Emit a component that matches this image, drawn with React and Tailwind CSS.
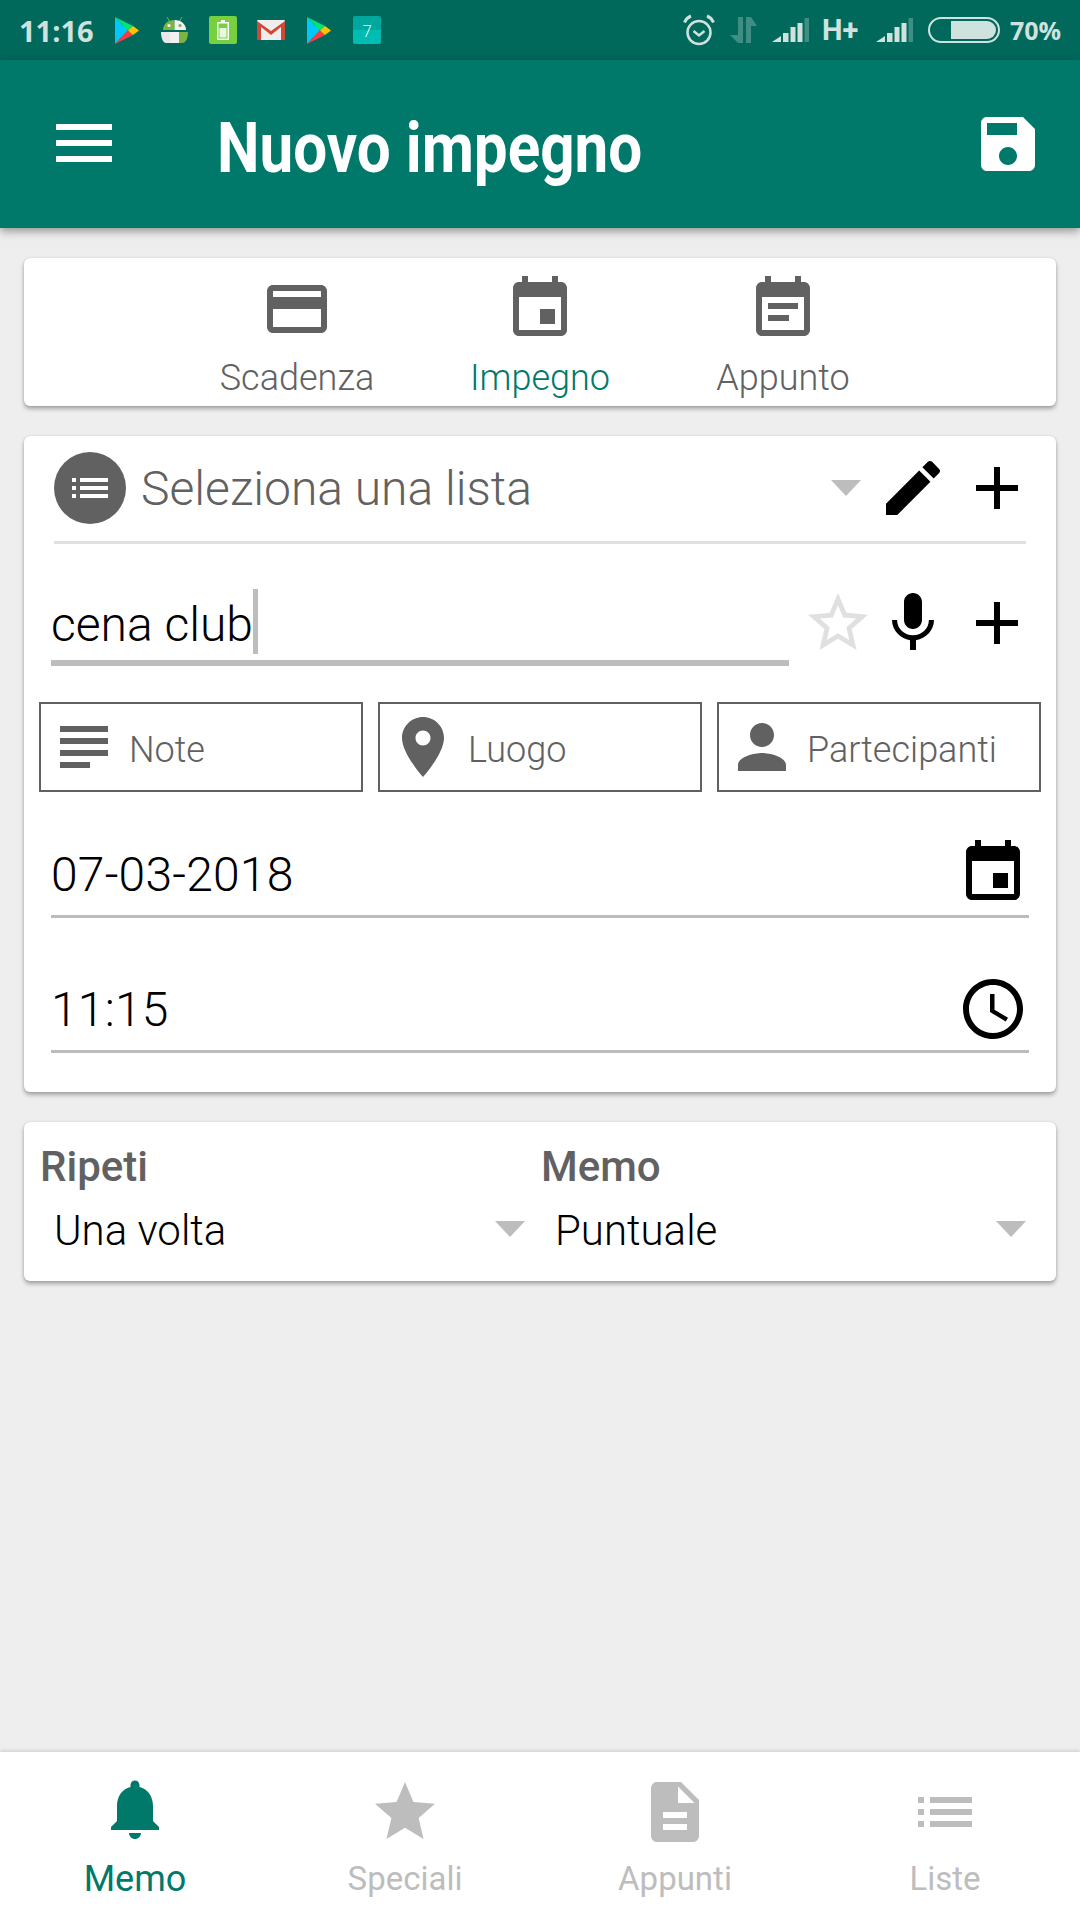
import React from "react";

const P = {
  card: "M20 4H4c-1.11 0-1.99.89-1.99 2L2 18c0 1.11.89 2 2 2h16c1.11 0 2-.89 2-2V6c0-1.11-.89-2-2-2zm0 14H4v-6h16v6zm0-10H4V6h16v2z",
  event: "M17 12h-5v5h5v-5zM16 1v2H8V1H6v2H5c-1.11 0-1.99.9-1.99 2L3 19c0 1.1.89 2 2 2h14c1.1 0 2-.9 2-2V5c0-1.1-.9-2-2-2h-1V1h-2zm3 18H5V8h14v11z",
  note: "M19 3h-1V1h-2v2H8V1H6v2H5c-1.11 0-1.99.9-1.99 2L3 19c0 1.1.89 2 2 2h14c1.1 0 2-.9 2-2V5c0-1.1-.9-2-2-2zm0 16H5V8h14v11zM7 10h10v2H7zm0 4h7v2H7z",
  list: "M3 13h2v-2H3v2zm0 4h2v-2H3v2zm0-8h2V7H3v2zm4 4h14v-2H7v2zm0 4h14v-2H7v2zM7 7v2h14V7H7z",
  edit: "M3 17.25V21h3.75L17.81 9.94l-3.75-3.75L3 17.25zM20.71 7.04c.39-.39.39-1.02 0-1.41l-2.34-2.34c-.39-.39-1.02-.39-1.41 0l-1.83 1.83 3.75 3.75 1.83-1.83z",
  add: "M19 13h-6v6h-2v-6H5v-2h6V5h2v6h6v2z",
  starBorder: "M22 9.24l-7.19-.62L12 2 9.19 8.63 2 9.24l5.46 4.73L5.82 21 12 17.27 18.18 21l-1.63-7.03L22 9.24zM12 15.4l-3.76 2.27 1-4.28-3.32-2.88 4.38-.38L12 6.1l1.71 4.04 4.38.38-3.32 2.88 1 4.28L12 15.4z",
  mic: "M12 14c1.66 0 2.99-1.34 2.99-3L15 5c0-1.66-1.34-3-3-3S9 3.34 9 5v6c0 1.66 1.34 3 3 3zm5.3-3c0 3-2.54 5.1-5.3 5.1S6.7 14 6.7 11H5c0 3.41 2.72 6.23 6 6.72V21h2v-3.28c3.28-.48 6-3.3 6-6.72h-1.7z",
  subject: "M14 17H4v2h10v-2zm6-8H4v2h16V9zM4 15h16v-2H4v2zM4 5v2h16V5H4z",
  place: "M12 2C8.13 2 5 5.13 5 9c0 5.25 7 13 7 13s7-7.75 7-13c0-3.87-3.13-7-7-7zm0 9.5c-1.38 0-2.5-1.12-2.5-2.5s1.12-2.5 2.5-2.5 2.5 1.12 2.5 2.5-1.12 2.5-2.5 2.5z",
  person: "M12 12c2.21 0 4-1.79 4-4s-1.79-4-4-4-4 1.79-4 4 1.79 4 4 4zm0 2c-2.67 0-8 1.34-8 4v2h16v-2c0-2.66-5.33-4-8-4z",
  clock: "M11.99 2C6.47 2 2 6.48 2 12s4.47 10 9.99 10C17.52 22 22 17.52 22 12S17.52 2 11.99 2zM12 20c-4.42 0-8-3.58-8-8s3.58-8 8-8 8 3.58 8 8-3.58 8-8 8zm.5-13H11v6l5.25 3.15.75-1.23-4.5-2.67z",
  save: "M17 3H5c-1.11 0-2 .9-2 2v14c0 1.1.89 2 2 2h14c1.1 0 2-.9 2-2V7l-4-4zm-5 16c-1.66 0-3-1.34-3-3s1.34-3 3-3 3 1.34 3 3-1.34 3-3 3zm3-10H5V5h10v4z",
  menu: "M3 5.33h18.67v2H3zM3 10.67h18.67v2H3zM3 16h18.67v2H3z",
  bell: "M12 22c1.1 0 2-.9 2-2h-4c0 1.1.89 2 2 2zm6-6v-5c0-3.07-1.64-5.64-4.5-6.32V4c0-.83-.67-1.5-1.5-1.5s-1.5.67-1.5 1.5v.68C7.63 5.36 6 7.92 6 11v5l-2 2v1h16v-1l-2-2z",
  star: "M12 17.27L18.18 21l-1.64-7.03L22 9.24l-7.19-.61L12 2 9.19 8.63 2 9.24l5.46 4.73L5.82 21z",
  doc: "M14 2H6c-1.1 0-1.99.9-1.99 2L4 20c0 1.1.89 2 1.99 2H18c1.1 0 2-.9 2-2V8l-6-6zm2 16H8v-2h8v2zm0-4H8v-2h8v2zm-3-5V3.5L18.5 9H13z",
};

function Icon({ d, className = "" }) {
  return (
    <svg viewBox="0 0 24 24" className={`w-[72px] h-[72px] shrink-0 fill-current ${className}`}>
      <path d={d} />
    </svg>
  );
}

function Caret() {
  return (
    <svg viewBox="0 0 30 16" className="w-[30px] h-[16px] shrink-0 fill-[#bdbdbd]">
      <polygon points="0,0 30,0 15,16" />
    </svg>
  );
}

function Play() {
  return (
    <svg viewBox="0 0 24 27" className="w-[24px] h-[27px] shrink-0">
      <polygon points="0,0 0,27 13,13.5" fill="#00c8ff" />
      <polygon points="0,0 13,13.5 18,9" fill="#00e676" />
      <polygon points="0,27 13,13.5 18,18" fill="#ff3a44" />
      <polygon points="18,9 24,13.5 18,18 13,13.5" fill="#ffc400" />
    </svg>
  );
}

function Signal() {
  return (
    <svg viewBox="0 0 37 24" className="w-[37px] h-[24px] shrink-0 fill-[#cfe2de]">
      <polygon points="0,24 9,24 9,18" />
      <rect x="11" y="15" width="5.5" height="9" />
      <rect x="18.5" y="9" width="5" height="15" />
      <rect x="25.5" y="5" width="5" height="19" />
      <rect x="32.5" y="0" width="4.5" height="24" fillOpacity="0.3" />
    </svg>
  );
}

function StatusBar() {
  return (
    <div className="h-[60px] shrink-0 bg-[#00695c] flex items-center justify-between pl-[19px] pr-[19px] text-[#cfe2de] font-['Open_Sans',sans-serif] font-semibold text-[28px]">
      <div className="flex items-center">
        <span className="w-[75px] mr-[21px] leading-none text-[29px] font-bold whitespace-nowrap">11:16</span>
        <Play />
        <svg viewBox="0 0 27 26" className="w-[27px] h-[26px] shrink-0 ml-[22px]">
          <path d="M6 0l3 5M21 0l-3 5" stroke="#7cb342" strokeWidth="1" />
          <path d="M2 13C2 7 7 3 13.5 3v10z" fill="#7cb342" />
          <path d="M13.5 3C20 3 25 7 25 13H13.5z" fill="#f1f1f1" />
          <circle cx="8" cy="8.5" r="1.6" fill="#f1f1f1" />
          <circle cx="19" cy="8.5" r="1.6" fill="#7cb342" />
          <path d="M0 15h9v11H5C2 26 0 21 0 15z" fill="#e8e8e8" />
          <path d="M9 15h9v11H9z" fill="#f1f1f1" />
          <path d="M18 15h9c0 6-2 11-6 11h-3z" fill="#7cb342" />
        </svg>
        <div className="w-[28px] h-[28px] ml-[21px] rounded-[2px] bg-[#76d03f] flex items-center justify-center">
          <svg viewBox="0 0 12 20" className="w-[12px] h-[20px]">
            <rect x="4" y="0" width="4" height="2" fill="#fff" />
            <rect x="0.75" y="2.75" width="10.5" height="16.5" fill="none" stroke="#fff" strokeWidth="1.5" />
            <rect x="2.5" y="8" width="7" height="9.5" fill="#fff" fillOpacity="0.85" />
          </svg>
        </div>
        <svg viewBox="0 0 28 20" className="w-[28px] h-[20px] shrink-0 ml-[20px]">
          <rect width="28" height="20" rx="1" fill="#eeeeee" />
          <path d="M0 1l14 10L28 1v19h-4V7L14 15 4 7v13H0z" fill="#d14836" />
        </svg>
        <div className="ml-[22px]"><Play /></div>
        <div className="relative w-[28px] h-[28px] ml-[22px] rounded-[2px] overflow-hidden flex flex-col">
          <div className="h-[14px] bg-[#00a79d]" />
          <div className="flex-1 bg-[#00bdb4]" />
          <span className="absolute inset-0 flex items-center justify-center text-white text-[17px] font-light leading-none">7</span>
        </div>
      </div>
      <div className="flex items-center">
        <svg viewBox="0 0 32 32" className="w-[32px] h-[32px] shrink-0 mr-[15px] fill-none stroke-[#cfe2de]">
          <circle cx="16" cy="18.5" r="11.5" strokeWidth="2.5" />
          <path d="M10.5 17l5.5 4.5 5.5-4.5" strokeWidth="2.5" />
          <path d="M1.5 8.5C3 5 5.5 3 8 2M30.5 8.5C29 5 26.5 3 24 2" strokeWidth="3" />
        </svg>
        <svg viewBox="0 0 27 26" className="w-[27px] h-[26px] shrink-0 mr-[15px] fill-[#cfe2de] opacity-30">
          <polygon points="0,18 8,18 8,0 13,0 13,26 8,26" />
          <polygon points="16,26 16,0 21,0 27,9 21,9 21,26" />
        </svg>
        <Signal />
        <span className="w-[35px] ml-[13px] mr-[19px] font-['Roboto',sans-serif] font-bold text-[29px] leading-none whitespace-nowrap">H+</span>
        <div className="mr-[15px]"><Signal /></div>
        <div className="w-[72px] h-[26px] rounded-full border-2 border-[#cfe2de] flex justify-end items-center pr-[2px] mr-[10px]">
          <div className="w-[45px] h-[18px] bg-[#cfe2de] rounded-r-full" />
        </div>
        <span className="w-[51px] leading-none text-[25px] font-bold whitespace-nowrap">70%</span>
      </div>
    </div>
  );
}

function AppBar() {
  return (
    <div className="relative z-10 h-[168px] shrink-0 bg-[#00796b] flex items-center pl-[47px] pr-[36px] text-white shadow-[0_3px_9px_rgba(0,0,0,0.4)]">
      <Icon d={P.menu} />
      <div className="flex-1 pl-[98px] pt-[8px]">
        <span className="block origin-left scale-x-[0.86] whitespace-nowrap font-bold text-[70px] leading-none">Nuovo impegno</span>
      </div>
      <Icon d={P.save} />
    </div>
  );
}

const cardCls = "bg-white rounded-[6px] shadow-[0_3px_4px_rgba(0,0,0,0.3),0_0_2px_rgba(0,0,0,0.15)]";

function Tab({ d, label, active }) {
  return (
    <div className="w-[243px] flex flex-col items-center">
      <Icon d={d} className="text-[#616161]" />
      <span className={`mt-[12px] text-[36px] leading-[42px] font-light ${active ? "text-[#00796b]" : "text-[#616161]"}`}>{label}</span>
    </div>
  );
}

function Chip({ d, label }) {
  return (
    <div className="w-[324px] h-[90px] border-2 border-[#616161] flex items-center pl-[7px] text-[#616161]">
      <Icon d={d} />
      <span className="ml-[9px] pt-[5px] text-[36px] font-light leading-none">{label}</span>
    </div>
  );
}

function Field({ value, d, pb, top, textCls }) {
  return (
    <div className={`mx-[27px] flex items-center justify-between border-b-[3px] border-[#bdbdbd] text-black ${pb} ${top}`}>
      <span className={`text-[48px] font-light leading-none tracking-[0.2px] ${textCls}`}>{value}</span>
      <Icon d={d} />
    </div>
  );
}

function Select({ label, value }) {
  return (
    <div>
      <div className="text-[#616161] font-medium text-[42px] leading-[46px]">{label}</div>
      <div className="mt-[16px] pl-[14px] pr-[16px] flex items-center justify-between">
        <span className="text-black text-[42px] font-light leading-[50px]">{value}</span>
        <div className="-mt-[4px]"><Caret /></div>
      </div>
    </div>
  );
}

function NavItem({ d, label, active, iconCls }) {
  return (
    <div className={`flex flex-col items-center ${active ? "text-[#00796b]" : "text-[#bdbdbd]"}`}>
      <Icon d={d} className={iconCls} />
      <span className={`mt-[10px] leading-[42px] ${active ? "text-[36px]" : "text-[33px]"}`}>{label}</span>
    </div>
  );
}

export default function App() {
  return (
    <div className="w-[1080px] h-[1920px] flex flex-col bg-[#eeeeee] overflow-hidden font-['Roboto',sans-serif]">
      <StatusBar />
      <AppBar />
      <div className="flex-1 px-[24px] pt-[30px] flex flex-col gap-[30px]">
        <div className={`${cardCls} h-[148px] pt-[15px] flex justify-center`}>
          <Tab d={P.card} label="Scadenza" />
          <Tab d={P.event} label="Impegno" active />
          <Tab d={P.note} label="Appunto" />
        </div>

        <div className={`${cardCls} pt-[16px] pb-[39px]`}>
          <div className="flex items-center pl-[30px] pr-[23px]">
            <div className="w-[72px] h-[72px] rounded-full bg-[#616161] flex items-center justify-center text-white">
              <svg viewBox="0 0 24 24" className="w-[48px] h-[48px] fill-current"><path d={P.list} /></svg>
            </div>
            <span className="flex-1 ml-[15px] pt-[2px] text-[#616161] text-[48px] font-light leading-none">Seleziona una lista</span>
            <Caret />
            <Icon d={P.edit} className="ml-[16px] text-black" />
            <Icon d={P.add} className="ml-[12px] text-black" />
          </div>
          <div className="mx-[30px] mt-[17px] h-[3px] bg-[#e0e0e0]" />

          <div className="mt-[43px] flex items-start pl-[27px] pr-[23px]">
            <div className="w-[738px] h-[79px] border-b-[6px] border-[#bdbdbd] flex items-start">
              <span className="pt-[13px] text-[48px] font-light leading-[50px] text-black">cena club</span>
              <span className="w-[5px] h-[65px] mt-[2px] bg-[#bdbdbd]" />
            </div>
            <Icon d={P.starBorder} className="ml-[13px] text-[#e0e0e0]" />
            <Icon d={P.mic} className="ml-[3px] text-black" />
            <Icon d={P.add} className="ml-[12px] text-black" />
          </div>

          <div className="mt-[36px] flex gap-[15px] px-[15px]">
            <Chip d={P.subject} label="Note" />
            <Chip d={P.place} label="Luogo" />
            <Chip d={P.person} label="Partecipanti" />
          </div>

          <Field value="07-03-2018" d={P.event} top="mt-[45px]" pb="pb-[6px]" textCls="pt-[3px]" />
          <Field value="11:15" d={P.clock} top="mt-[55px]" pb="pb-[5px]" textCls="pt-[2px]" />
        </div>

        <div className={`${cardCls} h-[159px] pl-[16px] pr-[14px] pt-[22px] grid grid-cols-2 items-start`}>
          <Select label="Ripeti" value="Una volta" />
          <Select label="Memo" value="Puntuale" />
        </div>
      </div>

      <div className="relative h-[168px] shrink-0 bg-white grid grid-cols-4 pt-[24px] shadow-[0_-1px_4px_rgba(0,0,0,0.15)]">
        <NavItem d={P.bell} label="Memo" active iconCls="-mt-[3px] mb-[3px]" />
        <NavItem d={P.star} label="Speciali" />
        <NavItem d={P.doc} label="Appunti" />
        <NavItem d={P.list} label="Liste" />
      </div>
    </div>
  );
}
